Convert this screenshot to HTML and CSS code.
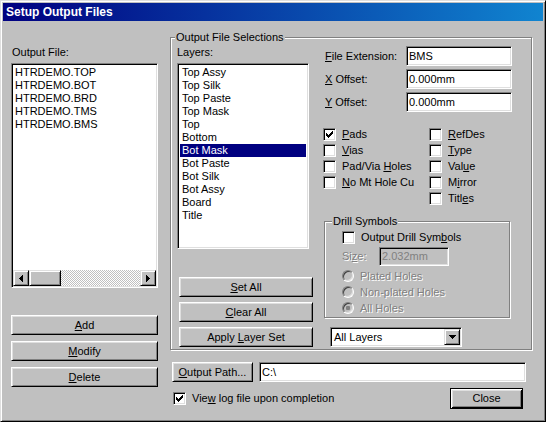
FILE: index.html
```html
<!DOCTYPE html>
<html>
<head>
<meta charset="utf-8">
<title>Setup Output Files</title>
<link rel="stylesheet" href="styles.css">
</head>
<body>
<div class="window">
  <div class="titlebar">Setup Output Files</div>
  <div class="client">
    <div class="left-col">
      <div class="label">Output File:</div>
      <div class="listbox files">
        <div class="items">
          <div class="item">HTRDEMO.TOP</div>
          <div class="item">HTRDEMO.BOT</div>
          <div class="item">HTRDEMO.BRD</div>
          <div class="item">HTRDEMO.TMS</div>
          <div class="item">HTRDEMO.BMS</div>
        </div>
        <div class="hscroll">
          <div class="sb-btn"><svg width="4" height="7" viewBox="0 0 4 7"><path d="M0 3h1v-1h1v-1h1v-1h1v7h-1v-1h-1v-1h-1v-1h-1z"/></svg></div>
          <div class="sb-thumb"></div>
          <div class="sb-track"></div>
          <div class="sb-btn"><svg width="4" height="7" viewBox="0 0 4 7"><path d="M0 0h1v1h1v1h1v1h1v1h-1v1h-1v1h-1v1h-1z"/></svg></div>
        </div>
      </div>
      <div class="btn-stack">
        <button class="btn wide"><span><u>A</u>dd</span></button>
        <button class="btn wide"><span><u>M</u>odify</span></button>
        <button class="btn wide"><span><u>D</u>elete</span></button>
      </div>
    </div>

    <div class="right-col">
      <fieldset class="group main-group">
        <legend>Output File Selections</legend>
        <div class="layers-col">
          <div class="label">Layers:</div>
          <div class="listbox layers">
            <div class="items">
              <div class="item">Top Assy</div>
              <div class="item">Top Silk</div>
              <div class="item">Top Paste</div>
              <div class="item">Top Mask</div>
              <div class="item">Top</div>
              <div class="item">Bottom</div>
              <div class="item selected">Bot Mask</div>
              <div class="item">Bot Paste</div>
              <div class="item">Bot Silk</div>
              <div class="item">Bot Assy</div>
              <div class="item">Board</div>
              <div class="item">Title</div>
            </div>
          </div>
          <div class="layer-btns">
            <button class="btn layer-btn"><span><u>S</u>et All</span></button>
            <button class="btn layer-btn"><span><u>C</u>lear All</span></button>
            <button class="btn layer-btn"><span>Apply <u>L</u>ayer Set</span></button>
          </div>
        </div>

        <div class="opts-col">
          <div class="field-rows">
            <div class="field-row"><span class="field-label"><u>F</u>ile Extension:</span><div class="textbox">BMS</div></div>
            <div class="field-row"><span class="field-label"><u>X</u> Offset:</span><div class="textbox">0.000mm</div></div>
            <div class="field-row"><span class="field-label"><u>Y</u> Offset:</span><div class="textbox">0.000mm</div></div>
          </div>

          <div class="checks">
            <div class="check-col first">
              <div class="check-row"><span class="cb"><svg width="7" height="7" viewBox="0 0 7 7"><path d="M0 2H1V3H2V4H3V3H4V2H5V1H6V0H7V3H6V4H5V5H4V6H3V7H2V6H1V5H0Z"/></svg></span><span class="cb-label"><u>P</u>ads</span></div>
              <div class="check-row"><span class="cb"></span><span class="cb-label"><u>V</u>ias</span></div>
              <div class="check-row"><span class="cb"></span><span class="cb-label">Pad/Via <u>H</u>oles</span></div>
              <div class="check-row"><span class="cb"></span><span class="cb-label"><u>N</u>o Mt Hole Cu</span></div>
            </div>
            <div class="check-col">
              <div class="check-row"><span class="cb"></span><span class="cb-label"><u>R</u>efDes</span></div>
              <div class="check-row"><span class="cb"></span><span class="cb-label"><u>T</u>ype</span></div>
              <div class="check-row"><span class="cb"></span><span class="cb-label">Val<u>u</u>e</span></div>
              <div class="check-row"><span class="cb"></span><span class="cb-label">M<u>i</u>rror</span></div>
              <div class="check-row"><span class="cb"></span><span class="cb-label">Titl<u>e</u>s</span></div>
            </div>
          </div>

          <fieldset class="group drill">
            <legend>Drill Symbols</legend>
            <div class="check-row"><span class="cb"></span><span class="cb-label">Output Drill Sym<u>b</u>ols</span></div>
            <div class="size-row"><span class="size-label disabled">Si<u>z</u>e:</span><div class="textbox off">2.032mm</div></div>
            <div class="radios">
              <div class="radio-row"><span class="rb"></span><span class="rb-label disabled">Plated Holes</span></div>
              <div class="radio-row"><span class="rb"></span><span class="rb-label disabled">Non-plated Holes</span></div>
              <div class="radio-row"><span class="rb"><span class="dot"></span></span><span class="rb-label disabled">All Holes</span></div>
            </div>
          </fieldset>

          <div class="combo">
            <span class="combo-text">All Layers</span>
            <span class="combo-btn"><svg width="7" height="4" viewBox="0 0 7 4"><path d="M0 0h7v1h-1v1h-1v1h-1v1h-1v-1h-1v-1h-1v-1h-1z"/></svg></span>
          </div>
        </div>
      </fieldset>

      <div class="path-row">
        <button class="btn path-btn"><span><u>O</u>utput Path...</span></button>
        <div class="textbox path-box">C:\</div>
      </div>

      <div class="log-row">
        <span class="cb"><svg width="7" height="7" viewBox="0 0 7 7"><path d="M0 2H1V3H2V4H3V3H4V2H5V1H6V0H7V3H6V4H5V5H4V6H3V7H2V6H1V5H0Z"/></svg></span>
        <span class="cb-label">Vie<u>w</u> log file upon completion</span>
        <button class="btn default close-btn"><span>Close</span></button>
      </div>
    </div>
  </div>
</div>
</body>
</html>
```

FILE: styles.css
```css
* { box-sizing: border-box; }
html, body { margin: 0; padding: 0; }
body {
  width: 546px;
  height: 422px;
  overflow: hidden;
  background: #c0c0c0;
  font-family: "Liberation Sans", Arial, sans-serif;
  font-size: 11px;
  line-height: 13px;
  color: #000;
}
u { text-decoration: underline; text-underline-offset: 1px; }
svg { display: block; }
svg path { fill: #000; }

.window {
  width: 546px;
  height: 422px;
  background: #c0c0c0;
  border: 1px solid;
  border-color: #dfdfdf #000 #000 #dfdfdf;
  box-shadow: inset 1px 1px 0 #fff, inset -1px -1px 0 #808080;
  padding: 2px;
  display: flex;
  flex-direction: column;
}

.titlebar {
  flex: none;
  height: 18px;
  background: linear-gradient(to right, #000080, #1084d0);
  color: #fff;
  font-weight: bold;
  font-size: 12px;
  line-height: 18px;
  padding-left: 3px;
  white-space: nowrap;
}

.client {
  display: flex;
  padding-left: 8px;
}

/* ---------- left column ---------- */
.left-col {
  width: 147px;
  display: flex;
  flex-direction: column;
}
.label { height: 13px; white-space: nowrap; }
.left-col > .label { margin-top: 25px; padding-left: 1px; }

.listbox {
  background: #fff;
  border: 1px solid;
  border-color: #808080 #fff #fff #808080;
  box-shadow: inset 1px 1px 0 #000, inset -1px -1px 0 #dfdfdf;
  padding: 1px;
}
.files {
  margin-top: 4px;
  height: 225px;
  display: flex;
  flex-direction: column;
}
.files .items { flex: 1; padding: 1px 0 0 2px; }
.item { height: 13px; white-space: nowrap; }

.hscroll {
  height: 16px;
  display: flex;
  flex: none;
}
.sb-btn, .sb-thumb, .combo-btn {
  background: #c0c0c0;
  border: 1px solid;
  border-color: #dfdfdf #000 #000 #dfdfdf;
  box-shadow: inset 1px 1px 0 #fff, inset -1px -1px 0 #808080;
}
.sb-btn {
  width: 16px;
  height: 16px;
  display: flex;
  align-items: center;
  justify-content: center;
  flex: none;
}
.sb-thumb { width: 32px; height: 16px; flex: none; }
.sb-track {
  flex: 1;
  background: repeating-conic-gradient(#c0c0c0 0 25%, #fff 0 50%) 0 0 / 2px 2px;
}

.btn-stack {
  margin-top: 27px;
  display: flex;
  flex-direction: column;
  gap: 6px;
}

.btn {
  display: flex;
  align-items: center;
  justify-content: center;
  height: 20px;
  padding: 0;
  margin: 0;
  background: #c0c0c0;
  border: 1px solid;
  border-color: #fff #000 #000 #fff;
  box-shadow: inset 1px 1px 0 #dfdfdf, inset -1px -1px 0 #808080;
  font: inherit;
  color: #000;
  white-space: nowrap;
}
.btn.wide { width: 147px; }

/* ---------- group boxes ---------- */
.group {
  margin: 0;
  min-width: 0;
  border: 1px solid #808080;
  box-shadow: 1px 1px 0 #fff, inset 1px 1px 0 #fff;
}
.group > legend {
  padding: 0 1px;
  height: 13px;
  line-height: 13px;
  background: #c0c0c0;
  white-space: nowrap;
}

.right-col {
  margin-left: 12px;
  width: 363px;
  display: flex;
  flex-direction: column;
}
.main-group {
  margin-top: 10px;
  width: 362px;
  height: 319px;
  padding: 2px 0 0 6px;
  display: flex;
}
.main-group > legend { margin-left: -2px; }

.layers-col {
  width: 136px;
  flex: none;
  display: flex;
  flex-direction: column;
}
.layers {
  margin-top: 4px;
  width: 132px;
  height: 186px;
}
.layers .items { padding: 1px 1px 0 1px; }
.layers .item { padding-left: 2px; }
.layers .item.selected { background: #000080; color: #fff; }

.layer-btns {
  margin-top: 28px;
  margin-left: 2px;
  display: flex;
  flex-direction: column;
  gap: 5px;
}
.layer-btn { width: 134px; }

/* ---------- options column ---------- */
.opts-col {
  margin-left: 10px;
  flex: 1;
  display: flex;
  flex-direction: column;
}
.field-rows {
  display: flex;
  flex-direction: column;
  gap: 3px;
}
.field-row {
  height: 20px;
  display: flex;
  align-items: center;
}
.field-label {
  width: 83px;
  padding-left: 2px;
  white-space: nowrap;
}
.textbox {
  width: 106px;
  height: 20px;
  background: #fff;
  border: 1px solid;
  border-color: #808080 #fff #fff #808080;
  box-shadow: inset 1px 1px 0 #000, inset -1px -1px 0 #dfdfdf;
  padding: 0 2px;
  line-height: 18px;
  white-space: nowrap;
}
.textbox.off {
  width: 70px;
  height: 19px;
  line-height: 17px;
  background: #c0c0c0;
  color: #808080;
}

.checks {
  margin-top: 16px;
  display: flex;
}
.check-col.first { width: 106px; }
.check-row {
  height: 16px;
  display: flex;
  align-items: flex-start;
}
.cb {
  width: 13px;
  height: 13px;
  flex: none;
  background: #fff;
  border: 1px solid;
  border-color: #808080 #fff #fff #808080;
  box-shadow: inset 1px 1px 0 #000, inset -1px -1px 0 #dfdfdf;
  display: flex;
  align-items: center;
  justify-content: center;
}
.cb-label { margin-left: 6px; white-space: nowrap; }

.disabled { color: #808080; text-shadow: 1px 1px 0 #fff; }

.drill {
  margin-top: 7px;
  margin-left: 1px;
  width: 186px;
  padding: 3px 0 1px 17px;
}
.drill > legend { margin-left: -10px; }

.size-row {
  height: 19px;
  display: flex;
  align-items: center;
}
.size-label { width: 37px; }

.radios { margin-top: 2px; }
.radio-row {
  height: 16px;
  display: flex;
  align-items: center;
}
.rb {
  width: 12px;
  height: 12px;
  flex: none;
  border-radius: 50%;
  background: #c0c0c0;
  border: 1px solid;
  border-color: #808080 #fff #fff #808080;
  box-shadow: inset 1px 1px 0 #404040, inset -1px -1px 0 #dfdfdf;
  display: flex;
  align-items: center;
  justify-content: center;
}
.dot {
  width: 4px;
  height: 4px;
  border-radius: 1px;
  background: #808080;
}
.rb-label { margin-left: 6px; white-space: nowrap; }

.combo {
  margin-top: 9px;
  margin-left: 7px;
  width: 132px;
  height: 20px;
  background: #fff;
  border: 1px solid;
  border-color: #808080 #fff #fff #808080;
  box-shadow: inset 1px 1px 0 #000, inset -1px -1px 0 #dfdfdf;
  padding: 1px;
  display: flex;
  align-items: stretch;
}
.combo-text { flex: 1; padding-left: 2px; line-height: 16px; }
.combo-btn {
  width: 16px;
  flex: none;
  display: flex;
  align-items: center;
  justify-content: center;
}

/* ---------- bottom rows ---------- */
.path-row {
  margin-top: 12px;
  padding-left: 2px;
  height: 20px;
  display: flex;
}
.path-btn { width: 81px; }
.path-box { margin-left: 6px; width: 267px; }

.log-row {
  margin-top: 6px;
  height: 21px;
  display: flex;
  align-items: center;
  padding-left: 3px;
}
.close-btn {
  margin-left: auto;
  margin-right: 10px;
  width: 73px;
  height: 21px;
}
.btn.default {
  border: 1px solid #000;
  box-shadow: inset 1px 1px 0 #fff, inset -1px -1px 0 #000, inset 2px 2px 0 #dfdfdf, inset -2px -2px 0 #808080;
}
```
